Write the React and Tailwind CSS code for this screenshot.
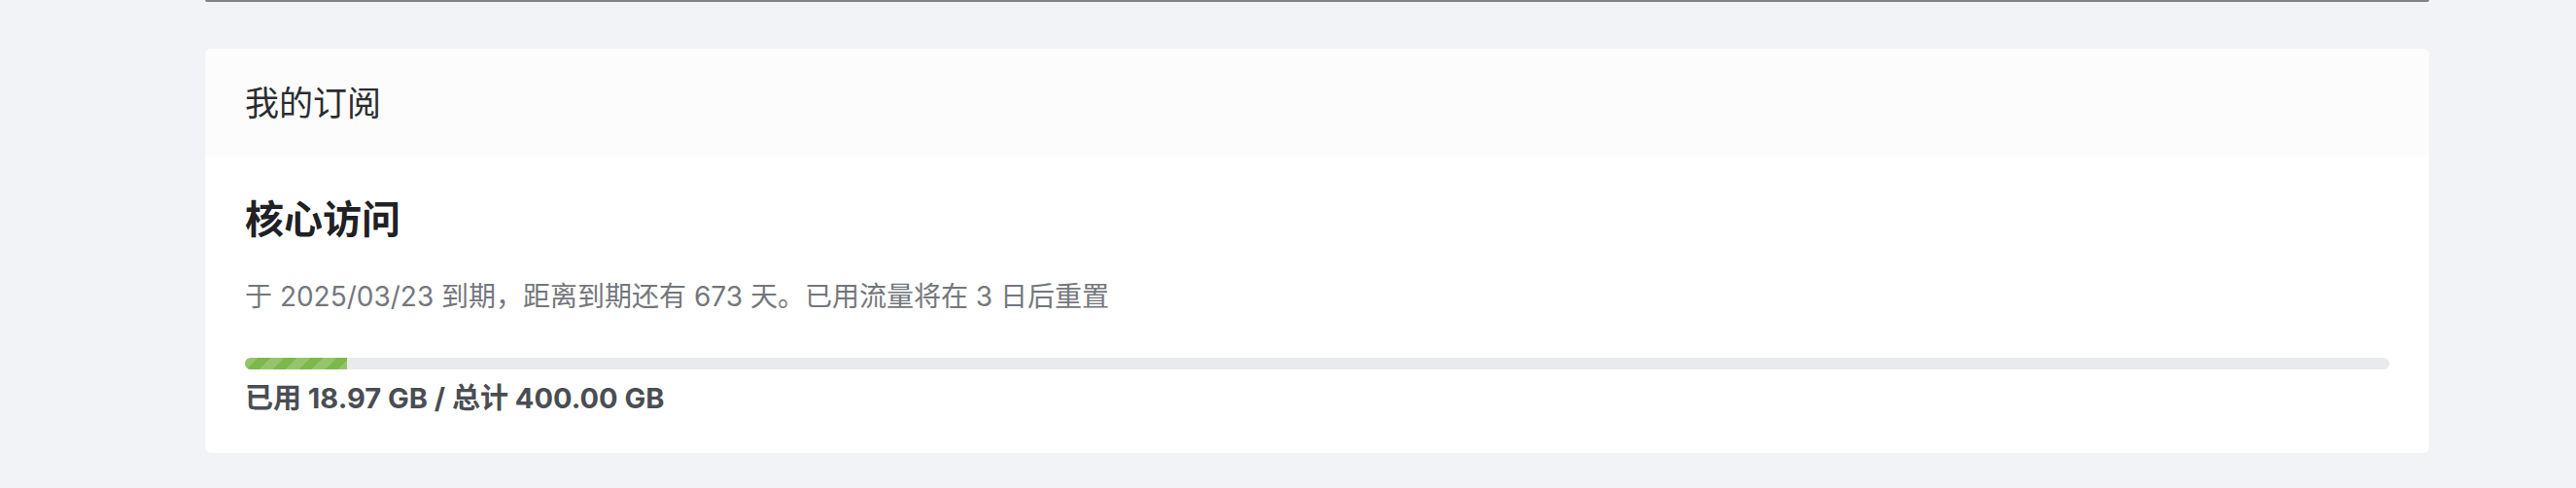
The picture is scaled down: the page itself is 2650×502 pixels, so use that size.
import React from "react";

const used = 18.97;
const total = 400;

export default function App() {
  const pct = (used / total) * 100;
  return (
    <div
      className="min-h-[502px] w-full bg-[#f2f3f7] pl-[211px] pr-[151px]"
      style={{ fontFamily: 'Inter, "Noto Sans CJK SC", "Noto Sans", sans-serif' }}
    >
      <div className="h-[2px] rounded-b-[3px] bg-[#808185]" />
      <div className="mt-[48px] overflow-hidden rounded-[6px] bg-white shadow-[0_0_2px_rgba(0,0,0,0.03)]">
        <div className="flex h-[111px] items-center bg-[#fcfcfc] px-[41px]">
          <span className="text-[35px] leading-[40px] text-[#2b2d30]">我的订阅</span>
        </div>
        <div className="px-[41px] pt-[41px] pb-[39px]">
          <div className="text-[40px] font-bold leading-[48px] text-[#1f2125]">核心访问</div>
          <div className="mt-[35px] text-[28px] leading-[40px] text-[#74777c]">
            于 2025/03/23 到期，距离到期还有 673 天。已用流量将在 3 日后重置
          </div>
          <div className="mt-[43px] h-[12px] w-full overflow-hidden rounded-full bg-[#e9eaee]">
            <div
              className="h-full bg-[#7db84b] bg-[linear-gradient(135deg,rgba(255,255,255,0.18)_25%,transparent_25%,transparent_50%,rgba(255,255,255,0.18)_50%,rgba(255,255,255,0.18)_75%,transparent_75%,transparent)] bg-[length:27px_27px]"
              style={{ width: `${pct}%` }}
            />
          </div>
          <div className="mt-[13px] text-[29px] font-bold leading-[34px] text-[#4a4d53]">
            已用 18.97 GB / 总计 400.00 GB
          </div>
        </div>
      </div>
    </div>
  );
}
